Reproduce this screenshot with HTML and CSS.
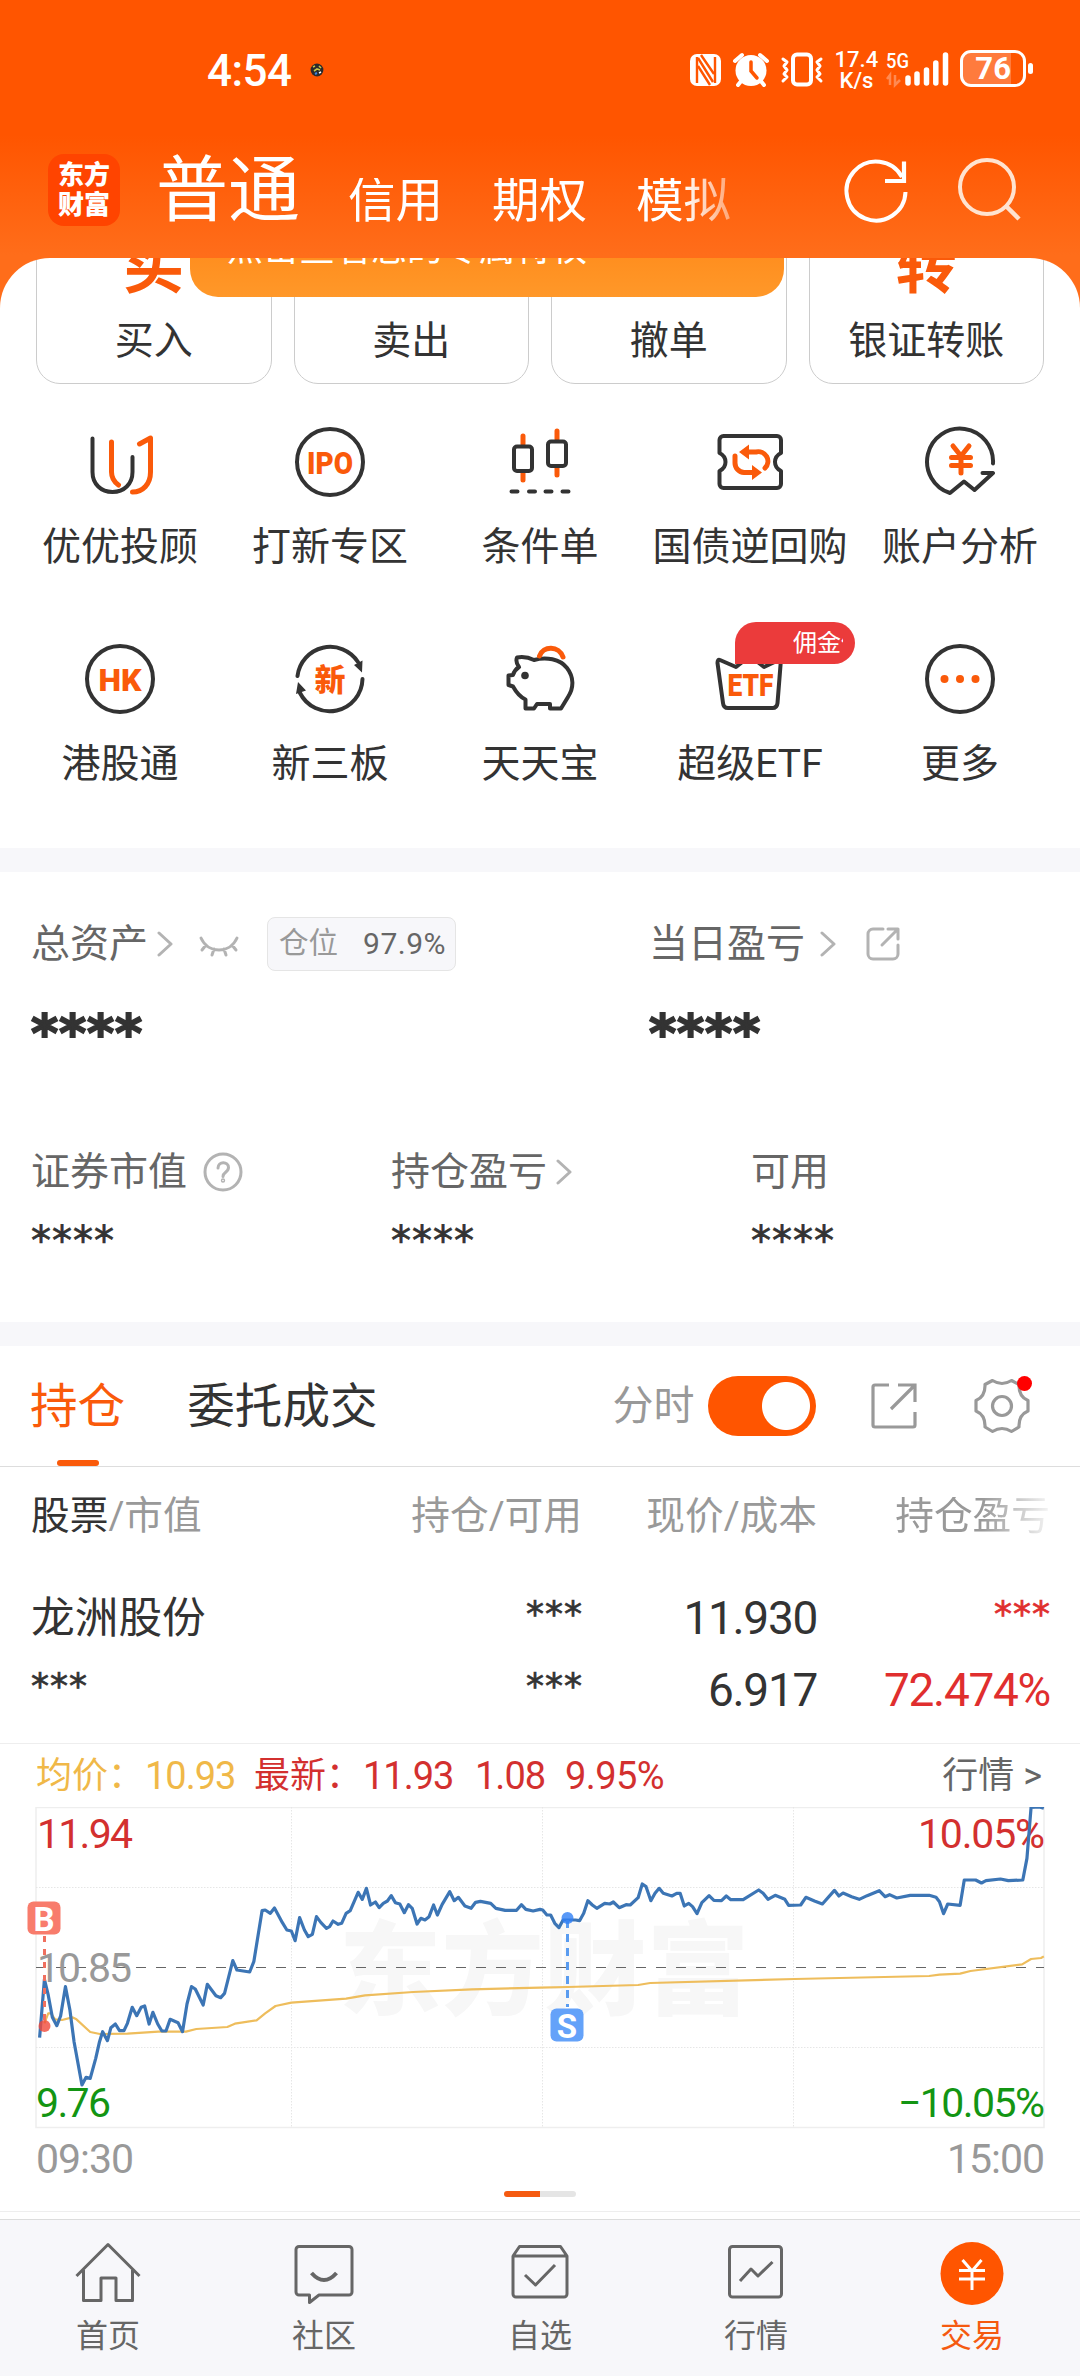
FILE: index.html
```html
<!DOCTYPE html>
<html lang="zh-CN">
<head>
<meta charset="utf-8">
<title>交易</title>
<link rel="stylesheet" href="styles.css">
</head>
<body>
<header class="top">
  <div class="status">
    <span class="clock">4:54</span>
    <svg class="notice" width="14" height="14" viewBox="0 0 14 14"><circle cx="7" cy="7" r="6.4" fill="#2b2a2c"/><path d="M3 4l2-1M9 3l2 2M4 8l3-2 3 1" stroke="#c7c44a" stroke-width="1.6"/><path d="M5 11l2-1" stroke="#3f86e0" stroke-width="2"/><path d="M9 10l2-1" stroke="#fff" stroke-width="1.4"/></svg>
    <svg class="sys" width="136" height="40" viewBox="688 50 136 40">
      <rect x="689" y="54" width="31" height="32" rx="7" fill="#fff"/>
      <path d="M696 57v26M714 57v26" stroke="#ff5500" stroke-width="2.4"/>
      <path d="M697 58l15 24M697 66l12 19M700 55l13 19" stroke="#ff5500" stroke-width="2.4" fill="none"/>
      <circle cx="750" cy="70.500" r="15.500" fill="#fff"/>
      <path d="M734 61l7-6M766 61l-7-6M741 80l-4 5M759 80l4 5" stroke="#fff" stroke-width="4" stroke-linecap="round"/>
      <path d="M750 62v9l6 7" stroke="#ff5500" stroke-width="3.500" fill="none" stroke-linecap="round"/>
      <rect x="792" y="54.500" width="18" height="30" rx="4" fill="none" stroke="#fff" stroke-width="4"/>
      <path d="M782 59l4 3-3 4 3 4-3 4 3 3-4 4M820 59l-4 3 3 4-3 4 3 4-3 3 4 4" fill="none" stroke="#fff" stroke-width="3" stroke-linejoin="round" stroke-linecap="round"/>
    </svg>
    <div class="speed"><span>17.4</span><span>K/s</span></div>
    <svg class="signal" width="66" height="40" viewBox="885 50 66 40">
      <text x="886" y="68" font-size="21" font-weight="500" fill="#fff" textLength="23" lengthAdjust="spacingAndGlyphs">5G</text>
      <path d="M887 79l3-4v10M895 75v10l5-5" fill="none" stroke="#ff8a52" stroke-width="2.500"/>
      <path d="M908 78v5M917 74v9M926.500 70v13M935.800 63v20M945.500 55v28" stroke="#fff" stroke-width="5.500" stroke-linecap="round"/>
    </svg>
    <div class="battery"><span>76</span></div>
    <i class="nub"></i>
  </div>
  <nav class="accounts">
    <div class="logo"><span>东方</span><span>财富</span></div>
    <span class="account on">普通</span>
    <div class="account-list"><span>信用</span><span>期权</span><span>模拟</span></div>
    <svg class="refresh" width="72" height="72" viewBox="0 0 72 72"><path d="M65.500 37A29.500 29.500 0 1 1 62 22" fill="none" stroke="#fff" stroke-width="4"/><path d="M64 6.500V26H45" fill="none" stroke="#fff" stroke-width="4.200"/></svg>
    <svg class="search" width="72" height="72" viewBox="0 0 72 72"><circle cx="33" cy="31" r="27" fill="none" stroke="#ffe3d0" stroke-width="4"/><path d="M52 50l13 13" stroke="#ffe3d0" stroke-width="4.500"/></svg>
  </nav>
</header>

<main class="sheet">
  <div class="toast">点击查看您的专属特权</div>
  <section class="cards">
    <div class="card"><b>买</b><span>买入</span></div>
    <div class="card"><b></b><span>卖出</span></div>
    <div class="card"><b></b><span>撤单</span></div>
    <div class="card"><b>转</b><span>银证转账</span></div>
  </section>

  <section class="tools">
    <div class="tool"><svg width="72" height="72" viewBox="0 0 72 72"><g class="dark"><path d="M8.500 12.500V46C8.500 58 17 66 28.500 66S48.500 58 48.500 46V31"/></g><g class="hot"><path d="M27.500 16V46q0 8 7 13M55.500 18L66.500 12V46C66.500 58 59 66 48.500 66"/></g></svg><span>优优投顾</span></div>
    <div class="tool"><svg width="72" height="72" viewBox="0 0 72 72"><circle class="dark" cx="36" cy="36" r="33"/><text class="glyph" x="13" y="47.500" font-size="32" textLength="46" lengthAdjust="spacingAndGlyphs">IPO</text></svg><span>打新专区</span></div>
    <div class="tool"><svg width="72" height="72" viewBox="0 0 72 72"><g class="hot"><path d="M19 10v8M19 47v7M53 5v8M53 42v7"/></g><g class="dark"><rect x="10" y="20.500" width="18" height="24.500" rx="3"/><rect x="44" y="15.500" width="18" height="24.500" rx="3"/><path d="M7.500 65.500h6M25 65.500h6M41.500 65.500h6M58.500 65.500h6"/></g></svg><span>条件单</span></div>
    <div class="tool"><svg width="72" height="72" viewBox="0 0 72 72"><path class="dark" d="M9.500 10H63a4 4 0 0 1 4 4V27q-6 3-6 9t6 9V58a4 4 0 0 1-4 4H9.500a4 4 0 0 1-4-4V45q6-3 6-9t-6-9V14a4 4 0 0 1 4-4z"/><g class="hot"><path d="M34 26H42A9.500 9.500 0 0 1 51 42M21 30V37A9.500 9.500 0 0 0 30 46.500H40"/></g><path fill="#fa5a0a" d="M25 26l10-7.500v15zM48 46.500l-10 7.500v-15z"/></svg><span>国债逆回购</span></div>
    <div class="tool"><svg width="72" height="72" viewBox="0 0 72 72"><path class="dark" d="M69 37.500A33 33 0 1 0 26 67L40 55.500L50.500 64L69 47H58.500"/><g class="hot"><path d="M29 20l8 10 8-10M37 30v17M27.500 31.500h19M27.500 39.500h19"/></g></svg><span>账户分析</span></div>
    <div class="tool"><svg width="72" height="72" viewBox="0 0 72 72"><circle class="dark" cx="36" cy="36" r="33"/><text class="glyph" x="14.500" y="47.500" font-size="32" textLength="43" lengthAdjust="spacingAndGlyphs">HK</text></svg><span>港股通</span></div>
    <div class="tool"><svg width="72" height="72" viewBox="0 0 72 72"><g class="dark"><path d="M3.500 33A33 33 0 0 1 64 19M68.500 36A33 33 0 0 1 6 50"/></g><path fill="#333" d="M60 22l8.500-4.500-.5 12zM2 51l2-12 8 8.500z"/><text class="glyph" x="20.500" y="47.500" font-size="31">新</text></svg><span>新三板</span></div>
    <div class="tool"><svg width="72" height="72" viewBox="0 0 72 72"><path class="dark" d="M15 24C12 20 12 17 13 14.500C19 13.500 25 14.500 30 17C42 13.500 56 16 63 25C70 34 70 45 64 54L57 65.500H46V61H33L30 65.500H21.500V56.500C15 53.500 11.500 48 9 43.500L4.500 42V32.500L9 32C10 28.500 12 26 15 24z"/><circle cx="21" cy="32.500" r="3.800" fill="#333"/><path class="hot" d="M35.500 13C39 2.500 55 2.500 59 14"/></svg><span>天天宝</span></div>
    <div class="tool"><svg width="72" height="72" viewBox="0 0 72 72"><path class="dark" d="M6 17L22 24L36 13L50 24L67 16L63.500 60q-.5 5-5 5H14q-4.500 0-5-5L3.500 20q0-4 2.500-3z"/><text class="glyph" x="13.500" y="53" font-size="32" textLength="46" lengthAdjust="spacingAndGlyphs">ETF</text></svg><em class="badge"><span>佣金低</span></em><span>超级ETF</span></div>
    <div class="tool"><svg width="72" height="72" viewBox="0 0 72 72"><circle class="dark" cx="36" cy="36" r="33"/><g fill="#fa5a0a"><circle cx="20.500" cy="36" r="4"/><circle cx="36" cy="36" r="4"/><circle cx="51.500" cy="36" r="4"/></g></svg><span>更多</span></div>
  </section>

  <section class="assets">
    <div class="total">
      <div class="asset">
        <div class="line"><span>总资产</span>
          <svg class="chev" width="16" height="26" viewBox="0 0 16 26"><path d="M2 2l12 11L2 24"/></svg>
          <svg class="eye" width="42" height="24" viewBox="0 0 42 24"><path d="M3 4C10 20 32 20 39 4M8 11l-4 5M16 15l-2 6M26 15l2 6M34 11l4 5"/></svg>
          <span class="ratio"><i>仓位</i><b>97.9%</b></span></div>
        <div class="mask big">****</div>
      </div>
      <div class="asset">
        <div class="line"><span>当日盈亏</span>
          <svg class="chev day" width="16" height="26" viewBox="0 0 16 26"><path d="M2 2l12 11L2 24"/></svg>
          <svg class="share" width="36" height="36" viewBox="0 0 36 36"><path d="M18 3H8a5 5 0 0 0-5 5V28a5 5 0 0 0 5 5H28a5 5 0 0 0 5-5V19M23 3H33V13M33 3L17 19"/></svg></div>
        <div class="mask big">****</div>
      </div>
    </div>
    <div class="split">
      <div class="asset"><div class="line"><span>证券市值</span><svg class="help" width="40" height="40" viewBox="0 0 40 40"><circle cx="20" cy="20" r="18"/><path d="M15 16c0-7 10.500-7 10.500-.5 0 5-5.500 4.500-5.500 9"/><circle cx="20" cy="28.500" r=".7"/></svg></div><div class="mask">****</div></div>
      <div class="asset"><div class="line"><span>持仓盈亏</span><svg class="chev" width="16" height="26" viewBox="0 0 16 26"><path d="M2 2l12 11L2 24"/></svg></div><div class="mask">****</div></div>
      <div class="asset"><div class="line"><span>可用</span></div><div class="mask">****</div></div>
    </div>
  </section>

  <section class="positions">
    <div class="tabs">
      <span class="tab on">持仓</span><span class="tab">委托成交</span>
      <span class="minute">分时</span><i class="toggle"></i>
      <svg class="open" width="48" height="48" viewBox="0 0 48 48"><path d="M19 3H5a2 2 0 0 0-2 2V43a2 2 0 0 0 2 2H43a2 2 0 0 0 2-2V30M28 3H45V20M45 3L21 27"/></svg>
      <div class="gear"><svg width="60" height="60" viewBox="0 0 60 60"><path d="M20.500 4.500q9.500 6 19 0L47 8.500q-.500 12 9 16v10.500q-9.500 4-9 16L39.500 55.500q-9.500-6-19 0L13 51q.500-12-9-16V24.500q9.500-4 9-16z" stroke-linejoin="round"/><circle cx="30" cy="30" r="9.500"/></svg><i></i></div>
    </div>
    <div class="row head"><span><em>股票</em>/市值</span><span>持仓/可用</span><span>现价/成本</span><span class="fade">持仓盈亏</span></div>
    <div class="row first"><span class="name">龙洲股份</span><span class="mask">***</span><span class="num">11.930</span><span class="mask red">***</span></div>
    <div class="row second"><span class="mask">***</span><span class="mask">***</span><span class="num">6.917</span><span class="num red">72.474%</span></div>
    <div class="legend"><span class="avg">均价：</span><span class="avg v1">10.93</span><span class="now">最新：</span><span class="now v2">11.93</span><span class="now v3">1.08</span><span class="now v4">9.95%</span><span class="more">行情 &gt;</span></div>
    <svg class="chart" width="1080" height="382" viewBox="0 77 1080 382">
      <text x="339" y="277" font-size="102" font-weight="900" fill="#f7f7f7" textLength="410">东方财富</text>
      <rect x="36" y="77.500" width="1008" height="320" fill="none" stroke="#eee" stroke-width="1.500"/>
      <path d="M36 157.500H1044M36 317.500H1044M291.500 77V397M542.500 77V397M793.500 77V397" stroke="#e6e6e6" stroke-dasharray="1.500 1.500"/>
      <path d="M36 237.500H1044" stroke="#666" stroke-dasharray="10 10"/>
      <g font-size="41">
        <text x="37" y="118" fill="#d3302f" textLength="96">11.94</text>
        <text x="1045" y="118" fill="#d3302f" text-anchor="end" textLength="127">10.05%</text>
        <text x="37" y="252" fill="#999" textLength="95">10.85</text>
        <text x="36" y="387" fill="#139513" textLength="75">9.76</text>
        <text x="1045" y="387" fill="#139513" text-anchor="end" textLength="147">−10.05%</text>
        <text x="36" y="443" fill="#999" textLength="98">09:30</text>
        <text x="1045" y="443" fill="#999" text-anchor="end" textLength="98">15:00</text>
      </g>
      <g transform="scale(.34438 .33333)" class="series">
        <polyline class="mean" points="129,880 140,850 148,850 160,868 180,870 210,862 222,868 262,906 290,912 370,911 460,905 540,905 570,897 660,891 682,881 745,871 770,850 800,828 846,818 1005,806 1060,796 1200,786 1370,778 1568,773 1648,771 1853,765 1888,759 2308,747 2698,738 2728,734 2788,731 2818,723 2968,703 2994,687 3023,684 3031,679"/>
        <polyline class="price" points="115,923 129,748 140,795 152,862 165,887 176,858 190,770 203,840 215,935 238,1065 250,1042 262,1045 278,985 289,935 298,905 312,932 322,893 335,882 347,902 360,902 370,880 384,832 397,857 410,832 420,828 433,882 444,847 458,882 470,903 482,903 494,868 517,878 530,905 543,822 556,770 567,777 590,825 602,763 627,797 641,803 652,790 676,692 688,720 725,726 737,695 761,542 770,540 785,550 797,534 820,578 833,600 846,603 857,632 870,563 884,600 895,620 907,613 919,560 932,578 948,595 957,590 967,573 982,583 992,580 1005,550 1017,542 1040,487 1052,508 1064,475 1076,525 1090,516 1101,533 1113,520 1125,513 1136,497 1148,518 1161,522 1174,548 1186,524 1197,535 1211,582 1222,565 1234,570 1246,560 1259,525 1270,555 1284,523 1306,485 1319,512 1331,502 1350,528 1368,535 1381,517 1395,514 1425,520 1440,535 1467,541 1500,541 1514,524 1527,538 1548,543 1568,538 1576,540 1588,555 1599,555 1611,580 1623,593 1635,570 1671,570 1683,572 1695,550 1707,512 1720,525 1733,535 1756,520 1771,522 1781,516 1798,533 1818,524 1830,525 1853,503 1865,462 1876,470 1890,512 1902,490 1914,475 1926,490 1951,498 1965,490 1975,490 1987,528 2000,520 2011,530 2024,551 2038,518 2059,497 2073,511 2095,512 2109,498 2122,509 2158,509 2203,480 2216,490 2230,508 2251,496 2279,508 2290,526 2325,525 2340,502 2365,513 2388,522 2423,481 2436,498 2448,489 2473,500 2495,508 2518,497 2553,482 2570,500 2583,494 2604,504 2643,496 2698,496 2718,502 2728,515 2740,551 2752,522 2788,526 2800,450 2833,450 2850,459 2863,452 2905,447 2928,452 2970,450 2982,385 2994,232 3018,231 3031,235"/>
      </g>
      <path d="M44.500 206V292" stroke="#f0705f" stroke-width="3" stroke-dasharray="6 7"/>
      <circle cx="44.500" cy="296" r="6" fill="#f04a3a" fill-opacity=".8"/>
      <rect x="27.500" y="171.500" width="33" height="33" rx="6" fill="#f87c6c"/>
      <text x="44" y="200.500" font-size="33" font-weight="700" fill="#fff" text-anchor="middle">B</text>
      <path d="M567.500 190V277" stroke="#5a9cf0" stroke-width="3" stroke-dasharray="8 6"/>
      <circle cx="567.500" cy="188" r="6" fill="#2f80f5" fill-opacity=".8"/>
      <rect x="550.500" y="278.500" width="33" height="33" rx="6" fill="#64a2f9"/>
      <text x="567" y="307.500" font-size="33" font-weight="700" fill="#fff" text-anchor="middle">S</text>
    </svg>
    <div class="pager"><i></i></div>
  </section>
</main>

<nav class="bottom">
  <div class="item"><svg width="72" height="72" viewBox="0 0 72 72"><path d="M4.500 39L36 7.500L67.500 39M11.500 33V63.500H29V41H44V63.500H60.500V33"/></svg><span>首页</span></div>
  <div class="item"><svg width="72" height="72" viewBox="0 0 72 72"><path d="M11 9.500H61a3 3 0 0 1 3 3V55a3 3 0 0 1-3 3H31L21.500 65.500V58H11a3 3 0 0 1-3-3V12.500a3 3 0 0 1 3-3z"/><path d="M23.500 36q12.500 14 25 0" stroke-width="4"/></svg><span>社区</span></div>
  <div class="item"><svg width="72" height="72" viewBox="0 0 72 72"><path d="M9 19L15.500 9.500H56.500L63 19V57a3 3 0 0 1-3 3H12a3 3 0 0 1-3-3V19H63M21 38L31.500 48L51 28"/></svg><span>自选</span></div>
  <div class="item"><svg width="72" height="72" viewBox="0 0 72 72"><rect x="9.500" y="9.500" width="52" height="50.500" rx="3"/><path d="M20 44L31 32L38 39L52.500 25"/></svg><span>行情</span></div>
  <div class="item on"><svg width="72" height="72" viewBox="0 0 72 72"><circle cx="36" cy="36.500" r="31.500"/><path d="M26.500 23L36 34L45.500 23M36 34V53M23 33.500H49M23 42H49"/></svg><span>交易</span></div>
</nav>
</body>
</html>
```
FILE: styles.css
```css
* { box-sizing: border-box; }
body {
  margin: 0;
  width: 1080px;
  height: 2376px;
  overflow: hidden;
  display: flex;
  flex-direction: column;
  background: linear-gradient(#ff5500 0, #ff5500 135px, #ff6d1a 255px, #ff6d1a 330px, #fff 331px);
  color: #333;
  font-family: Roboto, "Noto Sans CJK SC", sans-serif;
  font-size: 39px;
  line-height: 1;
}
i, em { font-style: normal; }
svg { display: block; flex: none; }
span { white-space: nowrap; }

.top { height: 258px; flex: none; color: #fff; }
.status { height: 140px; display: flex; align-items: center; padding: 0 47px 0 207px; }
.clock { font-size: 44px; font-weight: 500; width: 103px; letter-spacing: -.5px; margin-top: 2px; }
.sys { margin-left: 365px; }
.speed { width: 44px; margin-left: 10px; display: flex; flex-direction: column; align-items: center; font-size: 22px; font-weight: 500; line-height: 21px; }
.signal { margin-left: 7px; }
.battery {
  width: 66px; height: 37px; margin: -3px 0 0 9px; border: 3px solid #fff; border-radius: 11px;
  background: linear-gradient(90deg, #ff7b3d 48px, transparent 48px);
  font-size: 31px; font-weight: 700; line-height: 32px; text-align: center;
}
.nub { width: 5px; height: 11px; margin: -3px 0 0 2px; border-radius: 3px; background: #fff; flex: none; }
.accounts { display: flex; height: 100px; }
.logo {
  width: 72px; height: 72px; margin: 14px 0 0 48px; border-radius: 16px; background: #ff4400;
  display: flex; flex-direction: column; align-items: center; justify-content: center; gap: 3px;
  font-size: 26px; font-weight: 900; line-height: 27px;
}
.account.on { font-size: 72px; margin: 15px 0 0 36px; }
.account-list {
  display: flex; gap: 49px; width: 385px; flex: none; margin: 38px 0 0 48px; font-size: 47.5px;
  -webkit-mask-image: linear-gradient(90deg, #000 335px, rgba(0,0,0,.4) 385px);
}
.refresh { margin: 15px 0 0 107px; }
.search { margin: 16px 0 0 42px; }

.sheet { position: relative; height: 1961px; flex: none; overflow: hidden; background: #fff; border-radius: 50px 50px 0 0; }
.toast {
  position: absolute; left: 190px; top: -62px; width: 594px; height: 101px; padding: 35px 0 0 37px;
  border-radius: 28px; background: linear-gradient(#ff8010, #ff9829); color: #fff; font-size: 36px;
}
.cards { display: flex; gap: 22px; padding: 0 36px; height: 126px; }
.card {
  flex: 1; height: 226px; margin-top: -100px; border: 1px solid #ccc; border-radius: 24px;
  display: flex; flex-direction: column; align-items: center; justify-content: flex-end; padding-bottom: 22px;
}
.card b { color: #fa5a0a; font-size: 61px; margin-bottom: 24px; height: 61px; }

.tools { display: grid; grid-template-columns: repeat(5, 210px); grid-auto-rows: 217px; padding: 42px 15px 0; height: 464px; }
.tool { position: relative; display: flex; flex-direction: column; align-items: center; gap: 30px; }
.dark, .hot { fill: none; stroke: #333; stroke-width: 4; stroke-linecap: round; stroke-linejoin: round; }
.hot { stroke: #fa5a0a; stroke-width: 5; }
.glyph { fill: #fa5a0a; font-weight: 900; }
.badge {
  position: absolute; left: 90px; top: -21px; width: 120px; height: 42px; padding: 9px 12px 0 58px;
  background: #eb3b3b; border-radius: 21px 21px 21px 0; color: #fff; font-size: 24px;
}
.badge span { display: block; overflow: hidden; height: 28px; }

.assets { height: 498px; border: solid #f7f7fa; border-width: 24px 0; padding-left: 31px; color: #666; }
.asset { flex: none; }
.line { display: flex; align-items: center; height: 54px; }
.total { display: flex; padding-top: 45px; height: 247px; }
.total .asset { width: 618px; }
.chev, .eye, .share, .help { fill: none; stroke: #b3b3b3; stroke-width: 3; stroke-linecap: round; stroke-linejoin: round; }
.chev { margin-left: 9px; }
.chev.day { margin-left: 15px; }
.eye { margin: 4px 0 0 25px; }
.share { margin: 0 0 0 29px; }
.help { margin-left: 16px; }
.ratio {
  margin-left: 27px; width: 189px; height: 54px; padding: 0 9px 0 11px; border: 1px solid #e5e5e5; border-radius: 8px; background: #f7f7fa;
  display: flex; align-items: center; justify-content: space-between; font-size: 29.5px;
}
.ratio i { color: #999; }
.ratio b { font-weight: 400; letter-spacing: .5px; font-size: 30px; }
.mask { font-family: "DejaVu Sans", sans-serif; font-size: 40px; letter-spacing: 1px; color: #333; line-height: 50px; -webkit-text-stroke: .7px; }
.mask.big { font-size: 52px; font-weight: 700; letter-spacing: .8px; margin-top: 37px; -webkit-text-stroke: 1.8px; }
.split { display: flex; padding-top: 26px; }
.split .asset { width: 360px; }
.split .mask { margin-top: 17px; }

.tabs { display: flex; align-items: center; height: 121px; border-bottom: 1px solid #ddd; padding-left: 30px; }
.tab { font-size: 47.6px; margin-right: 62px; height: 120px; line-height: 122px; position: relative; }
.tab.on { color: #fa5a0a; }
.tab.on::after { content: ""; position: absolute; left: 27px; bottom: 0; width: 42px; height: 6px; border-radius: 3px; background: #fa5a0a; }
.minute { color: #999; font-size: 41px; margin-left: 173px; width: 95px; }
.toggle { width: 108px; height: 60px; flex: none; border-radius: 30px; background: radial-gradient(circle at 78px 30px, #fff 23.500px, #ff5500 24.500px); }
.open, .gear svg { fill: none; stroke: #999; stroke-width: 3.200; }
.open { margin-left: 54px; }
.gear { position: relative; margin-left: 54px; }
.gear i { position: absolute; right: 0; top: 0; width: 15px; height: 15px; border-radius: 50%; background: #f00; }

.row { display: grid; grid-template-columns: 281px 270px 235px 233px; padding-left: 31px; align-items: center; }
.row > :not(:first-child) { text-align: right; }
.head { height: 98px; color: #999; font-size: 38.7px; }
.head em { color: #333; }
.head .fade { -webkit-mask-image: linear-gradient(90deg, #000 165px, rgba(0,0,0,.1) 233px); }
.row .mask { font-size: 36px; letter-spacing: 1px; margin: -2px -1px 0 0; line-height: 66px; height: 72px; }
.first, .second { height: 72px; }
.first { margin-top: 17px; }
.name { font-size: 43.7px; padding-top: 2px; }
.num { font-size: 46px; letter-spacing: -1.3px; }
.row .red { color: #e02e2e; }

.legend { display: flex; align-items: center; height: 64px; margin-top: 17px; border-top: 1px solid #eee; padding: 0 38px 0 36px; font-size: 36px; }
.avg { color: #f0b848; width: 109px; }
.now { color: #d3302f; width: 109px; }
.v1, .v2, .v3, .v4 { font-size: 38px; letter-spacing: -1px; }
.v1 { width: 109px; }
.v2 { width: 112px; }
.v3 { width: 90px; }
.v4 { width: 110px; letter-spacing: -.6px; }
.more { margin-left: auto; color: #666; }
.series { fill: none; stroke-linejoin: round; }
.mean { stroke: #eebd5c; stroke-width: 2.200; vector-effect: non-scaling-stroke; }
.price { stroke: #3c75b5; stroke-width: 3.200; vector-effect: non-scaling-stroke; }
.pager { height: 23px; border-bottom: 1px solid #eee; padding-top: 2px; }
.pager i { display: block; width: 72px; height: 6px; margin: 0 auto; border-radius: 3px; background: linear-gradient(90deg, #f55a10 50%, #e5e5e5 50%); }

.bottom { flex: none; height: 157px; display: flex; background: #f7f7fa; border-top: 1px solid #ddd; color: #666; font-size: 32px; }
.item { flex: 1; display: flex; flex-direction: column; align-items: center; gap: 11px; padding-top: 17px; }
.item svg { fill: none; stroke: #666; stroke-width: 3; stroke-linejoin: round; }
.item.on { color: #f55a10; }
.item.on circle { fill: #ff5500; stroke: none; }
.item.on svg { stroke: #fff; }
```
